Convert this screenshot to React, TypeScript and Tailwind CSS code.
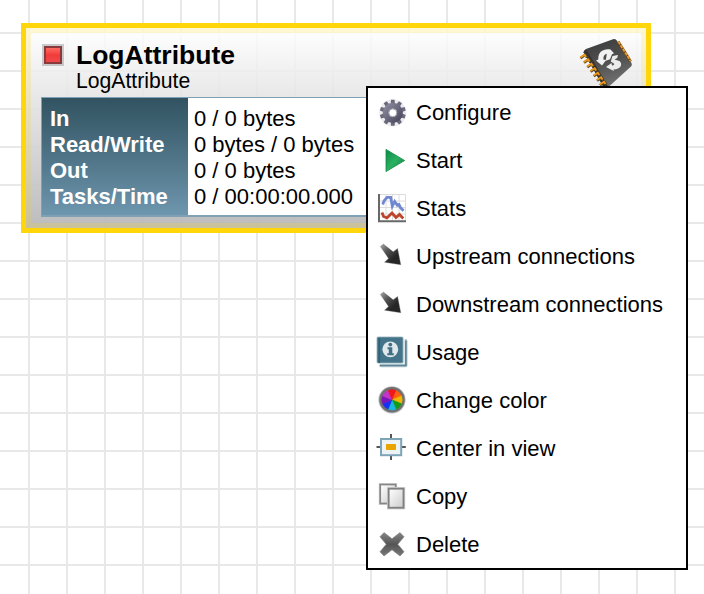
import React from "react";

const svg = "block h-8 w-8 shrink-0";

function GearIcon() {
  const teeth = [0, 36, 72, 108, 144, 180, 216, 252, 288, 324];
  return (
    <svg viewBox="0 0 32 32" className={svg}>
      <defs>
        <linearGradient id="gear" x1="0" y1="0" x2="1" y2="1">
          <stop offset="0" stopColor="#88869a" />
          <stop offset="1" stopColor="#4d4b60" />
        </linearGradient>
      </defs>
      <circle cx="16.8" cy="16.8" r="13.6" fill="#c9c9cf" opacity="0.35" />
      {teeth.map((a) => (
        <path key={a} d="M14.6 9 15 3.8h3.6L19 9z" fill="#6b697d" transform={`rotate(${a} 16.8 16.8)`} />
      ))}
      <circle cx="16.8" cy="16.8" r="7.1" fill="none" stroke="url(#gear)" strokeWidth="6" />
      <circle cx="16.8" cy="16.8" r="4" fill="#fff" stroke="#9897a5" strokeWidth="1" />
    </svg>
  );
}

function PlayIcon() {
  return (
    <svg viewBox="0 0 32 32" className={svg}>
      <defs>
        <linearGradient id="play" x1="0" y1="0" x2="1" y2="1">
          <stop offset="0" stopColor="#0b8a45" />
          <stop offset="0.5" stopColor="#2bb061" />
          <stop offset="1" stopColor="#08803c" />
        </linearGradient>
      </defs>
      <path d="M10 5.4 28.6 16.5 10 27.6z" fill="url(#play)" stroke="#0c8a44" strokeWidth="0.8" />
    </svg>
  );
}

function StatsIcon() {
  return (
    <svg viewBox="0 0 32 32" className={svg}>
      <path d="M4 2.5h25.5V28H4z" fill="#fff" />
      <path d="M4 2.5h25.5V28M10 2.5V28M16.5 2.5V28M23 2.5V28M4 9h25.5M4 15.5h25.5M4 22h25.5" fill="none" stroke="#dcdcdc" />
      <path d="m6.7 12.5 1.3-3.5 3-3.6h3.7l1.6 8.8 2.4-4.8 2.6 3.8 1.7-.6 1.6 3.2 3 3" fill="none" stroke="#7088d2" strokeWidth="2.8" />
      <path d="m6 20.5 1.5 4 3.5 1.3 5-4.8 4 4.5 3.5-3 3.8 4" fill="none" stroke="#bd452d" strokeWidth="2.8" />
      <path d="M3 2v27.2h27" fill="none" stroke="#686868" strokeWidth="2" />
    </svg>
  );
}

function ArrowIcon() {
  return (
    <svg viewBox="0 0 32 32" className={svg}>
      <defs>
        <linearGradient id="arrow" gradientUnits="userSpaceOnUse" x1="4" y1="4" x2="18" y2="18">
          <stop offset="0" stopColor="#aaa" />
          <stop offset="0.5" stopColor="#555" />
          <stop offset="1" stopColor="#262626" />
        </linearGradient>
      </defs>
      <path d="M4.4 6.5 7.4 4l9.8 7.8 4.4-3.4 3.2 16.4-16.3-2.6 4-3.8z" fill="url(#arrow)" stroke="#777" strokeOpacity="0.35" />
    </svg>
  );
}

function UsageIcon() {
  return (
    <svg viewBox="0 0 32 32" className={svg}>
      <rect x="3" y="3" width="28.5" height="28.3" rx="2" fill="#b4c3cb" />
      <path d="M28 3v25H3" fill="none" stroke="#f2f6f7" strokeWidth="1.8" />
      <path d="M29.8 4.5v24.8H4" fill="none" stroke="#5d8799" strokeWidth="1.8" />
      <rect x="1" y="1" width="26" height="26" rx="1" fill="#447489" stroke="#95b0bc" strokeWidth="0.8" />
      <path d="M3.3 2v25" stroke="#2e6076" strokeWidth="1.5" />
      <circle cx="14.3" cy="13.3" r="7.9" fill="#e0e8ec" />
      <circle cx="14.3" cy="8.6" r="1.9" fill="#3f7084" />
      <path d="M11.5 11.2h4.8v6h1.5v2h-6.5v-2h1.5v-4h-1.3z" fill="#3f7084" />
    </svg>
  );
}

function WheelIcon() {
  const colors = ["#ff5f12", "#f0b800", "#139a16", "#17b9dc", "#1730f8", "#7d14b8", "#c433cf", "#f01818"];
  return (
    <svg viewBox="0 0 32 32" className={svg}>
      <circle cx="16" cy="15.8" r="13.6" fill="#bbb" />
      <circle cx="16" cy="15.8" r="12.7" fill="#707070" />
      {colors.map((c, i) => (
        <path key={c} d="M16 15.8V5.5a10.3 10.3 0 0 1 7.3 3z" fill={c} stroke={c} strokeWidth="0.3" transform={`rotate(${i * 45 + 22} 16 15.8)`} />
      ))}
    </svg>
  );
}

function CenterIcon() {
  return (
    <svg viewBox="0 0 32 32" className={svg}>
      <path d="M15 2v5M15 23v5M.5 15H5M25 15h4.8" stroke="#565656" strokeWidth="2" />
      <rect x="5" y="7" width="20.2" height="16.2" fill="#edf2f4" stroke="#7da4b7" strokeWidth="2" />
      <rect x="10" y="12" width="10" height="6" rx="0.7" fill="#eaa400" />
    </svg>
  );
}

function CopyIcon() {
  return (
    <svg viewBox="0 0 32 32" className={svg}>
      <defs>
        <linearGradient id="sheet" x1="0" y1="0" x2="1" y2="1">
          <stop offset="0" stopColor="#fff" />
          <stop offset="1" stopColor="#ccc" />
        </linearGradient>
      </defs>
      <rect x="4.2" y="4.5" width="15.5" height="19" fill="url(#sheet)" stroke="#ddd" strokeWidth="3" />
      <rect x="4.2" y="4.5" width="15.5" height="19" fill="url(#sheet)" stroke="#858585" strokeWidth="1.7" />
      <rect x="12.7" y="8.7" width="14.8" height="19" fill="url(#sheet)" stroke="#d0d0d0" strokeWidth="3.4" />
      <rect x="12.7" y="8.7" width="14.8" height="19" fill="url(#sheet)" stroke="#808080" strokeWidth="1.8" />
    </svg>
  );
}

function DeleteIcon() {
  return (
    <svg viewBox="0 0 32 32" className={svg}>
      <defs>
        <linearGradient id="del" x1="0" y1="0" x2="0" y2="1">
          <stop offset="0" stopColor="#858585" />
          <stop offset="0.5" stopColor="#555" />
          <stop offset="1" stopColor="#777" />
        </linearGradient>
      </defs>
      <path d="m8 4.6 8 6.2 8-6.2 4 4.2-6.2 7.5 6.2 7.5-4 4.2-8-6.2L8 28l-4-4.2 6.2-7.5L4 8.800z" fill="url(#del)" stroke="#8a8a8a" strokeWidth="0.8" />
    </svg>
  );
}

function ChipIcon() {
  const pins = [
    [4.5, 22.5],
    [8, 27],
    [11.3, 31.5],
    [14.6, 36],
    [17.8, 40.5],
    [21, 45],
    [24, 49.5],
  ];
  return (
    <svg viewBox="0 0 62 54" className="block h-[54px] w-[62px] shrink-0">
      <defs>
        <linearGradient id="chip" x1="0.3" y1="0" x2="0.6" y2="1">
          <stop offset="0" stopColor="#3d3d3d" />
          <stop offset="0.5" stopColor="#515151" />
          <stop offset="1" stopColor="#747474" />
        </linearGradient>
      </defs>
      <path d="M10 15 37 5.200q2-.7 3.500 1L55.500 29q1 2-.5 3.500L33 52.500h-5L7.500 18.500q0-2.500 2.500-3.500z" fill="url(#chip)" />
      <path d="m7.500 18 3-2.500L32 52.500h-5z" fill="#343434" />
      {pins.map(([x, y]) => (
        <g key={x} transform={`translate(${x} ${y})`}>
          <path d="M0 1.800 4.500-1.500l2 2.300" fill="none" stroke="#5d4525" strokeWidth="2.600" />
          <path d="M-.2 1 4-1.700 5.500.5" fill="none" stroke="#eb9a1a" strokeWidth="1.900" />
        </g>
      ))}
      <path d="m42 7.500 12.500 20" stroke="#67451b" strokeWidth="3" />
      <path d="m42.300 7.500 12.300 19.500" stroke="#e69c32" strokeWidth="1.900" strokeDasharray="3.300 1" />
      <path d="M34.500 15.500C27 14.500 22 18 22.300 25.500l-2.300 1 6 5 4.500-6-3 .2c-.5-3.500.7-5.500 3.300-6l-1 7 4.200-1.500 2-5 2-1z" fill="#f1f1f1" />
      <path d="m36.500 22 5.500-1-.8 3-2.700 1.500 5 1.500c3.500 3 1.500 8.500-6 8.500l.3 1.500-7.800-4 5.500-4 .5 2.500c2 0 3-1.500 1.500-2.300l-2.700-1.700z" fill="#ececec" />
    </svg>
  );
}

const menu = [
  { label: "Configure", Icon: GearIcon },
  { label: "Start", Icon: PlayIcon },
  { label: "Stats", Icon: StatsIcon },
  { label: "Upstream connections", Icon: ArrowIcon },
  { label: "Downstream connections", Icon: ArrowIcon },
  { label: "Usage", Icon: UsageIcon },
  { label: "Change color", Icon: WheelIcon },
  { label: "Center in view", Icon: CenterIcon },
  { label: "Copy", Icon: CopyIcon },
  { label: "Delete", Icon: DeleteIcon },
];

const stats = [
  ["In", "0 / 0 bytes"],
  ["Read/Write", "0 bytes / 0 bytes"],
  ["Out", "0 / 0 bytes"],
  ["Tasks/Time", "0 / 00:00:00.000"],
];

function Processor() {
  return (
    <div className="absolute left-[21px] top-[23px] h-[210px] w-[630px] border-5 border-[#ffd60a]">
      <div className="h-full w-full bg-linear-to-b from-white/85 to-[#b9b9b9]/95">
        <div className="flex h-full flex-col border-5 border-[#ffd60a]/18 pl-[10px]">
          <div className="flex h-16 shrink-0">
            <div className="mt-[11px] ml-px h-[22px] w-[22px] shrink-0 border-2 border-[#aaa]/60">
              <div className="h-full w-full border-2 border-[#873b3f] bg-linear-to-b from-[#ff6961] via-[#f23a3a] to-[#f04848]" />
            </div>
            <div className="ml-[12px] flex-1 whitespace-nowrap">
              <div className="mt-[7px] h-[29px] text-[26.5px] leading-[30px] font-bold">LogAttribute</div>
              <div className="h-6 text-[21.2px] leading-6">LogAttribute</div>
            </div>
            <div className="mt-px mr-[3px]">
              <ChipIcon />
            </div>
          </div>
          <div className="mr-[10px] flex h-[120px] shrink-0 border border-b-2 border-[#7fa1b5] bg-white text-[22px] leading-[26px] whitespace-nowrap">
            <div className="w-[146px] bg-linear-to-b from-[#315361] to-[#6e96ae] pt-2 pl-2 font-bold text-white">
              {stats.map(([name]) => (
                <div key={name}>{name}</div>
              ))}
            </div>
            <div className="pt-2 pl-[6px]">
              {stats.map(([name, value]) => (
                <div key={name}>{value}</div>
              ))}
            </div>
          </div>
        </div>
      </div>
    </div>
  );
}

export default function App() {
  return (
    <div className="relative h-[594px] w-[704px] overflow-hidden bg-white bg-[linear-gradient(to_right,#e8e8e8_2px,transparent_2px),linear-gradient(to_bottom,#e8e8e8_2px,transparent_2px)] bg-[size:38px_38px] bg-[position:28px_32px] font-['Liberation_Sans',Arial,sans-serif] text-black">
      <Processor />
      <div className="absolute left-[366px] top-[86px] w-[322px] border-2 border-black bg-white">
        {menu.map(({ label, Icon }) => (
          <div key={label} className="flex h-12 items-center pl-2 text-[22px] leading-[26px] whitespace-nowrap">
            <Icon />
            <span className="ml-2 pt-0.5">{label}</span>
          </div>
        ))}
      </div>
    </div>
  );
}
